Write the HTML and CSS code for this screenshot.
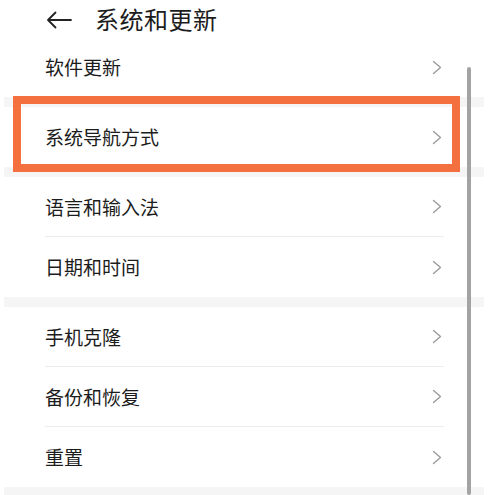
FILE: index.html
```html
<!DOCTYPE html>
<html lang="zh-CN">
  <head>
    <meta charset="UTF-8" />
    <title>系统和更新</title>
    <link rel="stylesheet" href="styles.css">
  </head>
  <body>
    <div class="page">
      <div class="header">
        <svg class="back" width="26" height="18" viewBox="0 0 26 18">
          <path d="M25 9H2M9.5 1.5L2 9l7.5 7.5" fill="none" stroke="#222" stroke-width="1.8" stroke-linecap="round" stroke-linejoin="round" />
        </svg>
        <h1>系统和更新</h1>
      </div>

      <div class="list">
        <div class="group">
          <div class="row"><span>软件更新</span><svg class="chev" width="10" height="15" viewBox="0 0 10 15"><path d="M1.5 1.5l7 6-7 6" /></svg></div>
        </div>
        <div class="group">
          <div class="row"><span>系统导航方式</span><svg class="chev" width="10" height="15" viewBox="0 0 10 15"><path d="M1.5 1.5l7 6-7 6" /></svg></div>
        </div>
        <div class="group">
          <div class="row line"><span>语言和输入法</span><svg class="chev" width="10" height="15" viewBox="0 0 10 15"><path d="M1.5 1.5l7 6-7 6" /></svg></div>
          <div class="row"><span>日期和时间</span><svg class="chev" width="10" height="15" viewBox="0 0 10 15"><path d="M1.5 1.5l7 6-7 6" /></svg></div>
        </div>
        <div class="group">
          <div class="row line"><span>手机克隆</span><svg class="chev" width="10" height="15" viewBox="0 0 10 15"><path d="M1.5 1.5l7 6-7 6" /></svg></div>
          <div class="row line"><span>备份和恢复</span><svg class="chev" width="10" height="15" viewBox="0 0 10 15"><path d="M1.5 1.5l7 6-7 6" /></svg></div>
          <div class="row"><span>重置</span><svg class="chev" width="10" height="15" viewBox="0 0 10 15"><path d="M1.5 1.5l7 6-7 6" /></svg></div>
        </div>
      </div>

      <div class="highlight"></div>
      <div class="scrollbar"></div>
    </div>
  </body>
</html>
```

FILE: styles.css
```css
* {
  box-sizing: border-box;
}

body {
  margin: 0;
  background: #ffffff;
  font-family: "Noto Sans CJK SC", "Noto Sans", sans-serif;
  color: #1c1c1c;
  height: 495px;
  overflow: hidden;
}

.page {
  position: relative;
  height: 495px;
  padding: 0 11px 0 4px;
  display: flex;
  flex-direction: column;
}

.header {
  height: 37px;
  flex-shrink: 0;
  display: flex;
  align-items: center;
  padding-left: 42px;
  gap: 23px;
}

.back {
  display: block;
  margin-top: 3px;
}

h1 {
  margin: 0;
  font-size: 24px;
  font-weight: 400;
  line-height: 1;
  letter-spacing: 0.5px;
}

.list {
  flex: 1;
  display: flex;
  flex-direction: column;
  gap: 10px;
  background: #f5f5f5;
}

.group {
  background: #ffffff;
}

.row {
  height: 60px;
  margin: 0 40px 0 41px;
  display: flex;
  align-items: center;
  justify-content: space-between;
  font-size: 19px;
}

.row span {
  margin-top: -1px;
}

.row.line {
  border-bottom: 1px solid #ececec;
}

.chev {
  display: block;
  margin-right: 2px;
}

.chev path {
  fill: none;
  stroke: #9a9a9a;
  stroke-width: 1.4;
  stroke-linecap: round;
  stroke-linejoin: round;
}

.highlight {
  position: absolute;
  left: 13px;
  top: 96px;
  width: 447px;
  height: 76px;
  border: 8px solid #f4703f;
}

.scrollbar {
  position: absolute;
  left: 467px;
  top: 67px;
  bottom: 0;
  width: 4px;
  border-radius: 2px;
  background: #a3a3a3;
}
```
